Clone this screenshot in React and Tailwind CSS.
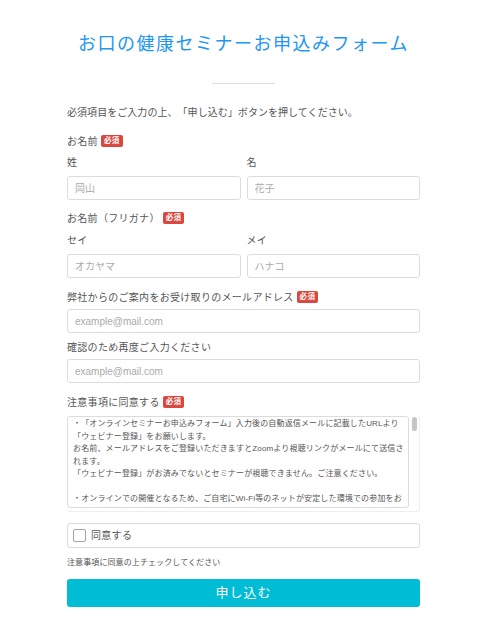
import React from "react";

const FONT = { fontFamily: '"Liberation Sans", "Noto Sans CJK JP", sans-serif' };

function Badge() {
  return (
    <span className="ml-[3px] inline-flex h-[12px] items-center rounded-[2px] bg-[#d9473f] px-[3px] text-[7.5px] font-bold leading-none text-white">
      必須
    </span>
  );
}

function Label({ children, req, className = "" }) {
  return (
    <div className={"flex h-[14px] items-center text-[10px] tracking-[0.3px] text-[#555] " + className}>
      <span>{children}</span>
      {req && <Badge />}
    </div>
  );
}

function Input({ placeholder }) {
  return (
    <input
      className="block h-[24px] w-full rounded-[3px] border border-[#dcdcdc] bg-white px-[7px] text-[10px] text-[#333] outline-none placeholder:text-[#aaa]"
      placeholder={placeholder}
      style={FONT}
    />
  );
}

const lines = [
  "・「オンラインセミナーお申込みフォーム」入力後の自動返信メールに記載したURLより",
  "「ウェビナー登録」をお願いします。",
  "お名前、メールアドレスをご登録いただきますとZoomより視聴リンクがメールにて送信さ",
  "れます。",
  "「ウェビナー登録」がお済みでないとセミナーが視聴できません。ご注意ください。",
  "\u00a0",
  "・オンラインでの開催となるため、ご自宅にWi-Fi等のネットが安定した環境での参加をお",
];

export default function App() {
  return (
    <div className="h-[618px] w-full overflow-hidden bg-white [text-spacing-trim:space-all]" style={FONT}>
      <div className="ml-[67px] w-[353px]">
        <h1 className="mt-[31px] h-[26px] text-center text-[18px] font-normal leading-[26px] tracking-[1.5px] text-[#2196f3]">
          お口の健康セミナーお申込みフォーム
        </h1>
        <div className="mx-auto mt-[26px] h-px w-[63px] bg-[#dddddd]" />

        <p className="mt-[22px] h-[14px] text-[10px] leading-[14px] tracking-[0.05px] text-[#555]">
          必須項目をご入力の上、「申し込む」ボタンを押してください。
        </p>

        <Label req className="mt-[14px]">お名前</Label>
        <div className="mt-[7px] grid grid-cols-2 gap-[6px]">
          <div>
            <Label>姓</Label>
            <div className="mt-[7px]"><Input placeholder="岡山" /></div>
          </div>
          <div>
            <Label>名</Label>
            <div className="mt-[7px]"><Input placeholder="花子" /></div>
          </div>
        </div>

        <Label req className="mt-[11px]">お名前（フリガナ）</Label>
        <div className="mt-[8px] grid grid-cols-2 gap-[6px]">
          <div>
            <Label>セイ</Label>
            <div className="mt-[7px]"><Input placeholder="オカヤマ" /></div>
          </div>
          <div>
            <Label>メイ</Label>
            <div className="mt-[7px]"><Input placeholder="ハナコ" /></div>
          </div>
        </div>

        <Label req className="mt-[12px]">弊社からのご案内をお受け取りのメールアドレス</Label>
        <div className="mt-[5px]"><Input placeholder="example@mail.com" /></div>

        <Label className="mt-[7px]">確認のため再度ご入力ください</Label>
        <div className="mt-[5px]"><Input placeholder="example@mail.com" /></div>

        <Label req className="mt-[12px]">注意事項に同意する</Label>
        <div className="mt-[7px] flex h-[96px] rounded-[3px] border-b border-r border-[#efefef]">
          <div className="h-[92px] flex-1 overflow-hidden rounded-[3px] border border-[#dcdcdc] px-[5px] pt-[1px]">
            {lines.map((l, i) => (
              <div key={i} className="h-[12.5px] whitespace-nowrap text-[8px] leading-[12.5px] tracking-[0.15px] text-[#555]">
                {l}
              </div>
            ))}
          </div>
          <div className="flex w-[10px] justify-center pt-[1px]">
            <div className="h-[14px] w-[5px] rounded-[3px] bg-[#c4c4c4]" />
          </div>
        </div>

        <label className="mt-[11px] flex h-[25px] items-center rounded-[3px] border border-[#dcdcdc] px-[5px]">
          <span className="h-[13px] w-[13px] rounded-[2px] border border-[#9aa4ad] bg-white" />
          <span className="ml-[5px] text-[10px] tracking-[0.3px] text-[#555]">同意する</span>
        </label>

        <p className="mt-[10px] h-[10px] text-[8px] leading-[10px] tracking-[0.1px] text-[#555]">
          注意事項に同意の上チェックしてください
        </p>

        <button className="mt-[11px] flex h-[28px] w-full items-center justify-center rounded-[3px] bg-[#00bcd4] text-[13px] tracking-[1px] text-white">
          申し込む
        </button>
      </div>
    </div>
  );
}
